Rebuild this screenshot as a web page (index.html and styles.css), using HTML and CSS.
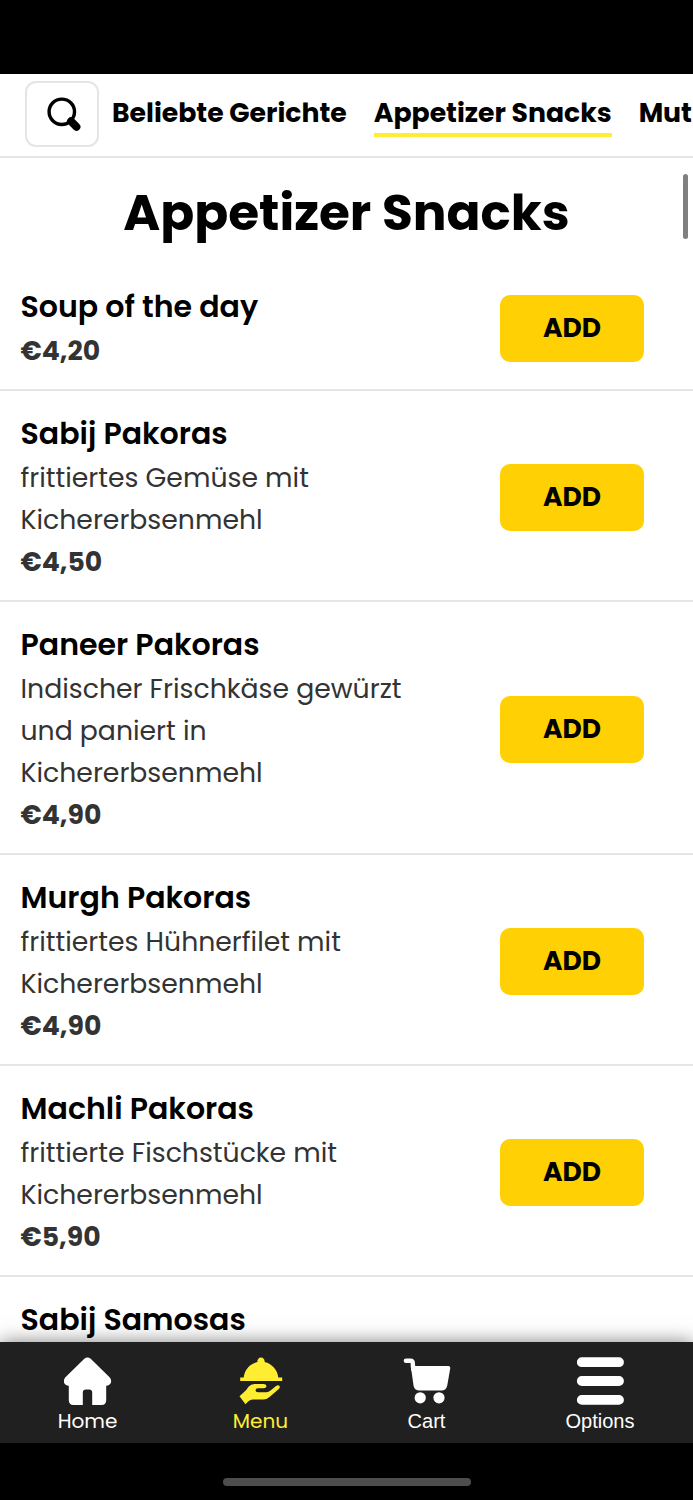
FILE: index.html
```html
<!DOCTYPE html>
<html lang="de">
<head>
<meta charset="utf-8">
<title>Appetizer Snacks</title>
<link rel="stylesheet" href="styles.css">
</head>
<body>
<div class="screen">
  <div class="status-bar"></div>
  <nav class="tabs">
    <button class="search" aria-label="Suche">
      <svg width="36" height="36" viewBox="0 0 36 36"><circle cx="15.8" cy="15.8" r="12.7" fill="none" stroke="#000" stroke-width="3.4"/><path d="M25 25.3 30.4 30.8" stroke="#000" stroke-width="8" stroke-linecap="round"/></svg>
    </button>
    <a class="tab">Beliebte Gerichte</a>
    <a class="tab active">Appetizer Snacks</a>
    <a class="tab">Mut</a>
  </nav>
  <main class="menu">
    <h1>Appetizer Snacks</h1>
    <article class="item"><div class="info"><h2>Soup of the day</h2><b class="price">€4,20</b></div><button class="add">ADD</button></article>
    <article class="item"><div class="info"><h2>Sabij Pakoras</h2><p>frittiertes Gemüse mit<br>Kichererbsenmehl</p><b class="price">€4,50</b></div><button class="add">ADD</button></article>
    <article class="item"><div class="info"><h2>Paneer Pakoras</h2><p>Indischer Frischkäse gewürzt<br>und paniert in<br>Kichererbsenmehl</p><b class="price">€4,90</b></div><button class="add">ADD</button></article>
    <article class="item"><div class="info"><h2>Murgh Pakoras</h2><p>frittiertes Hühnerfilet mit<br>Kichererbsenmehl</p><b class="price">€4,90</b></div><button class="add">ADD</button></article>
    <article class="item"><div class="info"><h2>Machli Pakoras</h2><p>frittierte Fischstücke mit<br>Kichererbsenmehl</p><b class="price">€5,90</b></div><button class="add">ADD</button></article>
    <article class="item"><div class="info"><h2>Sabij Samosas</h2></div></article>
    <div class="scrollbar"></div>
  </main>
  <footer class="bottom-nav">
    <a class="nav-item"><svg width="48" height="48" viewBox="0 0 48 48"><path fill="#fff" d="M20.3 1.7Q23.5 -0.9 26.7 1.7L45.8 20.6Q48.8 24.8 45.3 27.8Q44.2 28.8 42.2 28.8V43.3Q42.2 48 37.5 48H28.2V35.8Q28.2 32.6 25 32.6H22Q18.8 32.6 18.8 35.8V48H9.5Q4.8 48 4.8 43.3V28.8Q2.8 28.8 1.7 27.8Q-1.8 24.8 1.2 20.6Z"/></svg><span>Home</span></a>
    <a class="nav-item current"><svg width="48" height="48" viewBox="0 0 48 48"><g fill="#ffed32"><path d="M3.2 20.6H6.7C7.5 12.8 12.5 6.8 20.5 5A3.6 3.6 0 1 1 27.5 5C35 6.8 40.5 12.8 41.3 20.6H45.2V24H3.2Z"/><path d="M2.5 39.3 9 33.3 11.5 29.8Q14 27 17.5 27H27Q29.7 27.3 29.5 29.5Q29 31.3 26.5 31.3H21Q18.5 31.3 18.5 33.3T21 35.3H29.5Q31.5 35.3 33.5 33.5L39 29.1Q41.5 27.3 42.7 29.3Q43 31.1 41.5 32.3L32.5 40Q29.5 42.6 26.5 42.6H15.5Q11.5 43.3 8.5 47.3Z"/></g></svg><span>Menu</span></a>
    <a class="nav-item plain"><svg width="48" height="48" viewBox="0 0 48 48"><path d="M2.9 3.8H7.5Q9.7 3.8 9.8 6.3L10.2 12.3" fill="none" stroke="#fff" stroke-width="4.4" stroke-linecap="round"/><path fill="#fff" d="M7.8 9H45.2Q47.6 9 47.2 11.6L44.3 28.3Q43.2 33.5 38.5 33.5H16.5Q11.3 33.5 10.5 28.3Z"/><circle cx="17.2" cy="40.8" r="5.6" fill="#fff"/><circle cx="36" cy="40.8" r="5.6" fill="#fff"/></svg><span>Cart</span></a>
    <a class="nav-item plain"><svg width="48" height="48" viewBox="0 0 48 48"><path d="M5.8 5.2H43M5.8 24H43M5.8 42.9H43" stroke="#fff" stroke-width="9.8" stroke-linecap="round"/></svg><span>Options</span></a>
  </footer>
  <div class="gesture-area"><div class="gesture-bar"></div></div>
</div>
</body>
</html>
```

FILE: styles.css
```css
* { box-sizing: border-box; }
body { margin: 0; background: #000; color: #000; font-family: Poppins, Inter, sans-serif; font-feature-settings: "cv11"; }
.screen { width: 693px; height: 1500px; overflow: hidden; display: flex; flex-direction: column; background: #000; }
.status-bar { flex: none; height: 74px; }
.tabs { flex: none; height: 84px; display: flex; align-items: flex-start; padding: 7px 0 0 25px; background: #fff; border-bottom: 2px solid #e5e5e5; overflow: hidden; }
.search { flex: none; width: 74px; height: 66px; margin-right: 13px; padding: 0 0 0 3px; display: grid; place-items: center; background: #fff; border: 2px solid #e5e5e5; border-radius: 11px; }
.tab { flex: none; height: 56px; margin-right: 27px; padding-top: 12px; font-size: 26.7px; font-weight: 700; line-height: 40px; white-space: nowrap; border-bottom: 4px solid transparent; }
.active { border-color: #ffed32; }
.menu { position: relative; flex: 1; min-height: 0; overflow: hidden; background: #fff; }
h1 { margin: 0; height: 106px; padding: 22px 0 0; font-size: 50.1px; font-weight: 700; line-height: 66px; text-align: center; white-space: nowrap; }
.item { display: flex; align-items: center; justify-content: space-between; padding: 20px 49px 17px 20.5px; border-bottom: 2px solid #e5e5e5; }
.info { white-space: nowrap; }
h2 { margin: 0; font-size: 30.05px; font-weight: 600; line-height: 46px; }
p { margin: 0; font-size: 26.7px; font-weight: 400; line-height: 42px; color: #333; }
.price { display: block; font-size: 26.7px; font-weight: 700; line-height: 42px; color: #333; }
.add { flex: none; width: 144px; height: 67px; padding: 0; border: 0; border-radius: 10px; background: #ffd003; color: #000; font: 700 26.5px Poppins, Inter, sans-serif; }
.scrollbar { position: absolute; top: 16px; right: 5px; width: 5px; height: 65px; border-radius: 3px; background: #808080; }
.bottom-nav { position: relative; flex: none; height: 101px; display: grid; grid-template-columns: 175px 171px 161px 186px; background: #202020; box-shadow: 0 0 18px rgba(0,0,0,.5); }
.nav-item { display: flex; flex-direction: column; align-items: center; padding-top: 15px; color: #fff; font-size: 20.05px; font-weight: 400; line-height: 32px; }
.current { color: #ffed32; }
.plain { font-family: "Liberation Sans", Arial, sans-serif; }
.gesture-area { flex: none; height: 57px; display: flex; justify-content: center; padding-top: 35px; background: #000; }
.gesture-bar { width: 248px; height: 8px; border-radius: 4px; background: #4d4d4d; }
```
